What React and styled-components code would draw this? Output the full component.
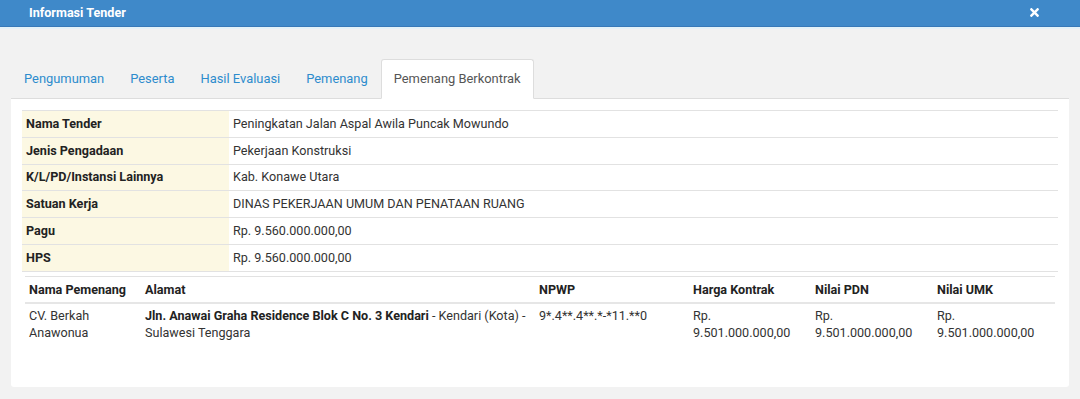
import React from "react";
import styled, { createGlobalStyle } from "styled-components";
import { FaTimes } from "react-icons/fa";

const GlobalStyle = createGlobalStyle`
  body {
    margin: 0;
    background: #f2f2f2;
    font-family: Roboto, "Liberation Sans", sans-serif;
    font-size: 12.6px;
    color: #333;
  }
`;

const tabs = ["Pengumuman", "Peserta", "Hasil Evaluasi", "Pemenang", "Pemenang Berkontrak"];

const info = [
  ["Nama Tender", "Peningkatan Jalan Aspal Awila Puncak Mowundo"],
  ["Jenis Pengadaan", "Pekerjaan Konstruksi"],
  ["K/L/PD/Instansi Lainnya", "Kab. Konawe Utara"],
  ["Satuan Kerja", "DINAS PEKERJAAN UMUM DAN PENATAAN RUANG"],
  ["Pagu", "Rp. 9.560.000.000,00"],
  ["HPS", "Rp. 9.560.000.000,00"],
];

const columns = [
  { label: "Nama Pemenang", width: 116 },
  { label: "Alamat", width: 394 },
  { label: "NPWP", width: 154 },
  { label: "Harga Kontrak", width: 122 },
  { label: "Nilai PDN", width: 122 },
  { label: "Nilai UMK", width: 122 },
];

const App = () => {
  return (
    <Modal>
      <GlobalStyle />
      <Header>
        <h4>Informasi Tender</h4>
        <FaTimes className="close" />
      </Header>
      <Body>
        <TabBar>
          {tabs.map((t) => (
            <Tab key={t} $active={t === "Pemenang Berkontrak"}>
              {t}
            </Tab>
          ))}
        </TabBar>
        <Panel>
          <InfoTable>
            <tbody>
              {info.map(([label, value]) => (
                <tr key={label}>
                  <th>{label}</th>
                  <td>{value}</td>
                </tr>
              ))}
            </tbody>
          </InfoTable>
          <WinnerTable>
            <colgroup>
              {columns.map((c) => (
                <col key={c.label} style={{ width: c.width }} />
              ))}
            </colgroup>
            <thead>
              <tr>
                {columns.map((c) => (
                  <th key={c.label}>{c.label}</th>
                ))}
              </tr>
            </thead>
            <tbody>
              <tr>
                <td>CV. Berkah Anawonua</td>
                <td>
                  <b>Jln. Anawai Graha Residence Blok C No. 3 Kendari</b> - Kendari (Kota) -
                  Sulawesi Tenggara
                </td>
                <td>9*.4**.4**.*-*11.**0</td>
                <td>Rp. 9.501.000.000,00</td>
                <td>Rp. 9.501.000.000,00</td>
                <td>Rp. 9.501.000.000,00</td>
              </tr>
            </tbody>
          </WinnerTable>
        </Panel>
      </Body>
    </Modal>
  );
};

const Modal = styled.div`
  width: 1080px;
  height: 399px;
  background: #f2f2f2;
  overflow: hidden;
`;

const Header = styled.div`
  height: 26px;
  background: #3f89c9;
  border-bottom: 1px solid #3779b8;
  box-shadow: 0 2px 0 #e4f2f8;
  display: flex;
  align-items: center;
  justify-content: space-between;
  padding: 0 39px 0 29px;
  h4 {
    margin: 0;
    color: #fff;
    font-size: 12.6px;
    font-weight: 700;
    margin-top: -2px;
  }
  .close {
    color: #fff;
    font-size: 13px;
    margin-top: -2px;
  }
`;

const Body = styled.div`
  padding: 32px 11px 0;
`;

const TabBar = styled.div`
  display: flex;
  border-bottom: 1px solid #ddd;
`;

const Tab = styled.div`
  padding: 10px 12px;
  font-size: 12.9px;
  line-height: 18px;
  border: 1px solid ${(p) => (p.$active ? "#ddd" : "transparent")};
  border-bottom-color: ${(p) => (p.$active ? "#fff" : "transparent")};
  border-radius: 3px 3px 0 0;
  margin-bottom: -1px;
  background: ${(p) => (p.$active ? "#fff" : "transparent")};
  color: ${(p) => (p.$active ? "#555" : "#2d8ccd")};
  cursor: pointer;
`;

const Panel = styled.div`
  background: #fff;
  padding: 11px 11px 42px;
  border-radius: 0 0 3px 3px;
`;

const InfoTable = styled.table`
  width: 100%;
  border-collapse: collapse;
  th,
  td {
    border-top: 1px solid #e2e2e2;
    height: 25.8px;
    padding: 0 4px;
    text-align: left;
    vertical-align: middle;
    line-height: 16px;
  }
  tr:last-child th,
  tr:last-child td {
    border-bottom: 1px solid #e2e2e2;
  }
  th {
    width: 199px;
    background: #fcf8e3;
    font-weight: 700;
    color: #222;
  }
`;

const WinnerTable = styled.table`
  width: 1030px;
  margin: 4px 0 0 3px;
  border-collapse: collapse;
  table-layout: fixed;
  th,
  td {
    text-align: left;
    padding: 4px;
    line-height: 17px;
    vertical-align: top;
  }
  th {
    border-top: 1px solid #e2e2e2;
    border-bottom: 2px solid #e6e6e6;
    font-weight: 700;
    color: #222;
    padding: 4px 4px 4px;
  }
  td {
    padding-top: 3px;
  }
  td b {
    font-weight: 700;
    color: #222;
  }
`;

export default App;
